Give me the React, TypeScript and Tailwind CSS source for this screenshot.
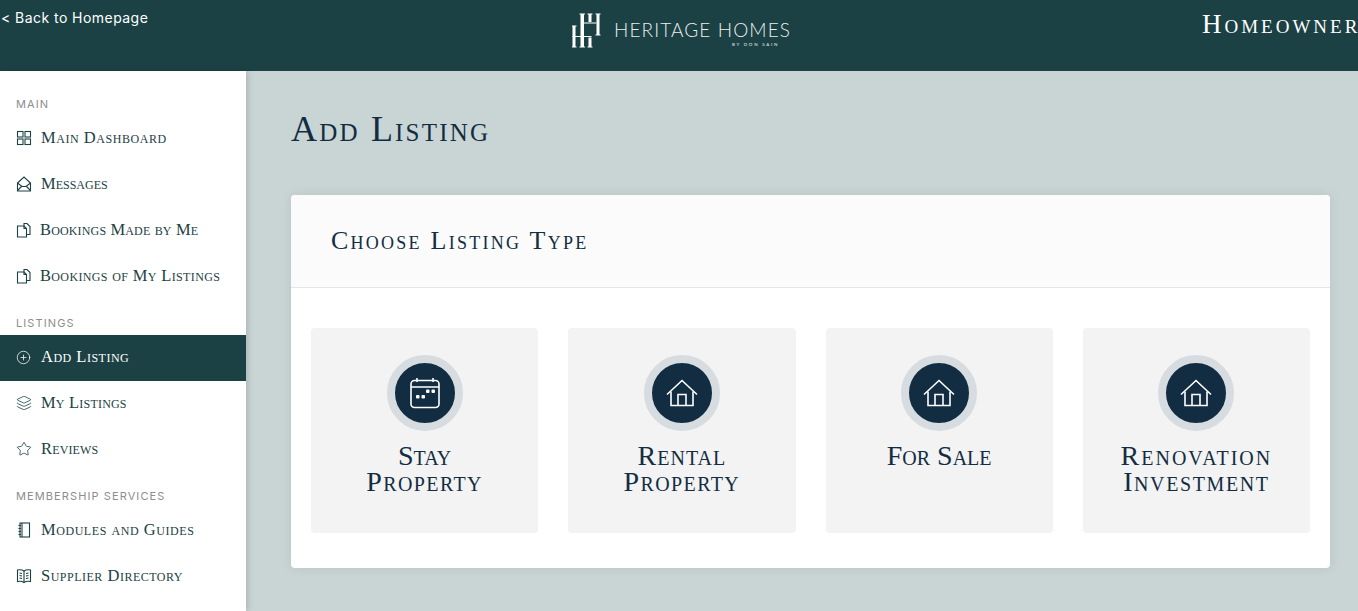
import { CirclePlus, Layers, Star } from "lucide-react";

const serif = "font-['Liberation_Serif',serif] [font-variant:small-caps]";

const CalendarIcon = () => (
  <svg width="32" height="32" viewBox="0 0 32 32" fill="none" stroke="white" strokeWidth="1.6">
    <rect x="2" y="3.5" width="28" height="27" rx="3.5" />
    <path d="M2 10h28M8 1v4M24 1v4" />
    <g fill="white" stroke="none">
      <rect x="7" y="18" width="3.5" height="3.5" rx="1" />
      <rect x="12.5" y="18" width="3.5" height="3.5" rx="1" />
      <rect x="17" y="12.5" width="3.5" height="3.5" rx="1" />
      <rect x="22.5" y="12.5" width="3.5" height="3.5" rx="1" />
    </g>
  </svg>
);

const HouseIcon = () => (
  <svg width="32" height="28" viewBox="0 0 32 28" fill="none" stroke="white" strokeWidth="1.6">
    <path d="M1 15.5 16 1.5l15 14" />
    <path d="M5 12.5V26.5H27V12.5" />
    <path d="M12 26.5V15.5H20V26.5" />
  </svg>
);

const GridIcon = () => (
  <svg width="16" height="16" viewBox="0 0 16 16" fill="none" stroke="currentColor" strokeWidth="1.1">
    <rect x="1.5" y="1.5" width="5.5" height="5.5" />
    <rect x="9" y="1.5" width="5.5" height="5.5" />
    <rect x="1.5" y="9" width="5.5" height="5.5" />
    <rect x="9" y="9" width="5.5" height="5.5" />
  </svg>
);

const EnvelopeIcon = () => (
  <svg width="16" height="16" viewBox="0 0 16 16" fill="none" stroke="currentColor" strokeWidth="1.1">
    <path d="M1.5 7 8 1l6.5 6v8h-13z" />
    <path d="M1.5 14.5 6 10M14.5 14.5 10 10M1.5 7 6 10.5h4L14.5 7" />
  </svg>
);

const DocsIcon = () => (
  <svg width="16" height="16" viewBox="0 0 16 16" fill="none" stroke="currentColor" strokeWidth="1.1">
    <path d="M1.5 4h6.5l2.5 2.5V15h-9z" />
    <path d="M8 4V1.5h3l3 3V12.5h-3.5" />
    <path d="M8 4v2.5h2.5" />
  </svg>
);

const NotebookIcon = () => (
  <svg width="16" height="16" viewBox="0 0 16 16" fill="none" stroke="currentColor" strokeWidth="1.1">
    <rect x="4" y="1" width="9.5" height="14" />
    <path d="M6 1v14M2.5 3.5H5M2.5 6.5H5M2.5 9.5H5M2.5 12.5H5" />
  </svg>
);

const BookIcon = () => (
  <svg width="16" height="16" viewBox="0 0 16 16" fill="none" stroke="currentColor" strokeWidth="1.1">
    <path d="M1.5 2C4 1.5 6.5 2 8 3c1.5-1 4-1.500 6.500-1V13.500C12 13 9.500 13.500 8 14.500 6.500 13.500 4 13 1.500 13.500z" />
    <path d="M8 3v11.500M3.500 5 6 5.500M3.500 7.500 6 8M3.500 10 6 10.500M12.500 5 10 5.500M12.500 7.500 10 8M12.500 10 10 10.500" />
  </svg>
);

const Logo = () => (
  <div className="flex items-start">
    <svg width="29" height="35" viewBox="0 0 29 35" fill="white">
      {/* lower H */}
      <rect x="0.5" y="13" width="3" height="21" />
      <rect x="8.500" y="1" width="3.500" height="33" />
      <rect x="16.500" y="1" width="3" height="8" />
      <rect x="16.500" y="24.500" width="3" height="9.500" />
      <rect x="24.500" y="1" width="3" height="21" />
      {/* crossbars */}
      <rect x="12" y="9.500" width="12.500" height="1" />
      <rect x="0.5" y="23" width="19" height="1" />
      {/* slab ends */}
      <rect x="0" y="12.500" width="4.500" height="1" />
      <rect x="0" y="33.500" width="4.500" height="1" />
      <rect x="7.500" y="0.500" width="5.500" height="1" />
      <rect x="7.500" y="33.500" width="5.500" height="1" />
      <rect x="15.500" y="0.500" width="5" height="1" />
      <rect x="15.500" y="33.500" width="5" height="1" />
      <rect x="23.500" y="0.500" width="5" height="1" />
      <rect x="23.500" y="21.500" width="5" height="1" />
    </svg>
    <div className="mt-[7px] ml-[13px] flex flex-col items-end text-[#e8eeee]">
      <span className="font-['Lato',sans-serif] text-[19px] leading-[20px] font-light tracking-[1.1px] whitespace-nowrap">
        HERITAGE HOMES
      </span>
      <span className="mt-[2px] mr-[12px] font-['Lato',sans-serif] text-[4.5px] leading-[6px] tracking-[1.7px]">
        BY DON SAIN
      </span>
    </div>
  </div>
);

const SideLabel = ({ text, box }: { text: string; box: string }) => (
  <div className={`${box} pl-4 font-['Inter',sans-serif] text-[11px] leading-[24px] tracking-[1.1px] text-[#8d8d8d]`}>
    {text}
  </div>
);

const SideItem = ({
  icon,
  text,
  spacing,
  active,
  lift,
  tight,
}: {
  icon: React.ReactNode;
  text: string;
  spacing: string;
  active?: boolean;
  lift?: boolean;
  tight?: boolean;
}) => (
  <div
    className={`flex h-[46px] items-center pl-4 ${active ? "bg-[#1c4144] text-white" : "text-[#1c4144]"} ${
      lift ? "pb-[2px]" : ""
    }`}
  >
    <span className={tight ? "w-[24px]" : "w-[25px]"}>{icon}</span>
    <span className={`${serif} ${spacing} text-[16.5px] leading-none whitespace-nowrap`}>{text}</span>
  </div>
);

const tiles = [
  {
    icon: <CalendarIcon />,
    lines: [
      { text: "Stay", spacing: "tracking-normal" },
      { text: "Property", spacing: "tracking-[1.4px]" },
    ],
  },
  {
    icon: <HouseIcon />,
    lines: [
      { text: "Rental", spacing: "tracking-[1px]" },
      { text: "Property", spacing: "tracking-[1.4px]" },
    ],
  },
  {
    icon: <HouseIcon />,
    lines: [{ text: "For Sale", spacing: "tracking-normal" }],
  },
  {
    icon: <HouseIcon />,
    lines: [
      { text: "Renovation", spacing: "tracking-[2px]" },
      { text: "Investment", spacing: "tracking-[1.6px]" },
    ],
  },
];

export default function App() {
  return (
    <div className="flex h-[611px] w-[1358px] flex-col overflow-hidden bg-[#c9d4d4]">
      {/* Header */}
      <div className="flex h-[71px] shrink-0 overflow-hidden bg-[#1c4144] text-white">
        <div className="w-[572px] shrink-0 pt-[9px] pl-[1px] font-['Inter',sans-serif] text-[14px] leading-[18px] tracking-[0.45px] whitespace-nowrap">
          &lt; Back to Homepage
        </div>
        <div className="w-[630px] shrink-0 pt-[13px]">
          <Logo />
        </div>
        <div className={`${serif} pt-[7px] text-[27px] leading-[34px] tracking-[3px] whitespace-nowrap`}>Homeowner</div>
      </div>

      <div className="flex min-h-0 flex-1">
        {/* Sidebar */}
        <div className="w-[246px] shrink-0 bg-white pt-[9px] shadow-[2px_0_6px_rgba(0,0,0,0.15)]">
          <SideLabel text="MAIN" box="h-[35px] pt-[12px]" />
          <SideItem icon={<GridIcon />} text="Main Dashboard" spacing="tracking-[0.55px]" />
          <SideItem icon={<EnvelopeIcon />} text="Messages" spacing="tracking-normal" />
          <SideItem icon={<DocsIcon />} text="Bookings Made by Me" spacing="tracking-[0.15px]" tight />
          <SideItem icon={<DocsIcon />} text="Bookings of My Listings" spacing="tracking-[0.35px]" tight />
          <SideLabel text="LISTINGS" box="h-[36px] pt-[12px]" />
          <SideItem icon={<CirclePlus size={15} strokeWidth={1.2} />} text="Add Listing" spacing="tracking-[0.5px]" active lift />
          <SideItem icon={<Layers size={16} strokeWidth={1.2} />} text="My Listings" spacing="tracking-[0.2px]" lift />
          <SideItem icon={<Star size={16} strokeWidth={1.2} />} text="Reviews" spacing="tracking-[0.15px]" lift />
          <SideLabel text="MEMBERSHIP SERVICES" box="h-[34px] pt-[11px]" />
          <SideItem icon={<NotebookIcon />} text="Modules and Guides" spacing="tracking-[0.55px]" />
          <SideItem icon={<BookIcon />} text="Supplier Directory" spacing="tracking-[0.5px]" />
        </div>

        {/* Main */}
        <div className="min-w-0 flex-1 pt-[38px] pr-[28px] pl-[45px]">
          <h1 className={`${serif} h-[86px] text-[36px] leading-[40px] tracking-[2.2px] text-[#122d42]`}>Add Listing</h1>
          <div className="overflow-hidden rounded bg-white shadow-[0_0_12px_rgba(0,0,0,0.08)]">
            <div className="flex h-[93px] items-center border-b border-[#e4e6e6] bg-[#fbfbfb] pb-[2px] pl-10">
              <span className={`${serif} text-[26px] tracking-[2.25px] text-[#122d42]`}>Choose Listing Type</span>
            </div>
            <div className="grid grid-cols-4 gap-[30px] px-5 pt-10 pb-[35px]">
              {tiles.map((tile) => (
                <div key={tile.lines[0].text} className="flex h-[205px] flex-col items-center rounded bg-[#f3f3f3] pt-[27px]">
                  <div className="flex size-[76px] items-center justify-center rounded-full border-8 border-[#d6dce0] bg-[#122d42]">
                    {tile.icon}
                  </div>
                  <div className={`${serif} mt-[12px] text-center text-[28px] leading-[26px] text-[#122d42]`}>
                    {tile.lines.map((line) => (
                      <div key={line.text} className={line.spacing}>
                        {line.text}
                      </div>
                    ))}
                  </div>
                </div>
              ))}
            </div>
          </div>
        </div>
      </div>
    </div>
  );
}
